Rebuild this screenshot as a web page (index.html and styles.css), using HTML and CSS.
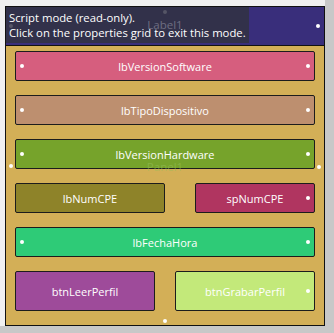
FILE: index.html
```html
<!DOCTYPE html>
<html lang="es">

<head>
    <meta charset="utf-8">
    <meta name="viewport" content="width=device-width, initial-scale=1.0">
    <title>Perfil</title>
    <link rel="stylesheet" href="styles.css">
</head>

<body>
    <main class="canvas">
        <div class="panel">
            <header class="cabecera">
                <span class="marca">Label1</span>
                <span class="punto punto-oscuro arriba"></span>
                <span class="punto punto-oscuro izquierda"></span>
                <span class="punto derecha"></span>
                <div class="aviso">Script mode (read-only).<br>Click on the properties grid to exit this mode.</div>
            </header>

            <section class="cuerpo">
                <div class="barra rosa"><span class="punto izq"></span>lbVersionSoftware<span class="punto der"></span></div>
                <div class="barra tierra"><span class="punto izq"></span>lbTipoDispositivo<span class="punto der"></span></div>
                <div class="barra verde"><span class="punto izq"></span>lbVersionHardware<span class="punto der"></span></div>
                <div class="fila">
                    <div class="barra oliva ancho-150">lbNumCPE</div>
                    <div class="barra granate ancho-120">spNumCPE<span class="punto der"></span></div>
                </div>
                <div class="barra menta"><span class="punto izq"></span>lbFechaHora<span class="punto der"></span></div>
                <div class="fila botones">
                    <div class="barra boton morado">btnLeerPerfil</div>
                    <div class="barra boton lima">btnGrabarPerfil<span class="punto der"></span></div>
                </div>
            </section>

            <span class="marca panel-marca">Panel1</span>
            <span class="punto panel-izq"></span>
            <span class="punto panel-der"></span>
            <span class="punto panel-abajo"></span>
        </div>
    </main>
</body></html>
```

FILE: styles.css
```css
body {
    margin: 0;
    background: #c8c8c8;
    font-family: "Open Sans", "Noto Sans", sans-serif;
    font-size: 11px;
}

.canvas {
    width: 320px;
    height: 320px;
    padding: 6px 0 0 5px;
    background: #f0f0f0;
}

.panel {
    position: relative;
    width: 318px;
    height: 318px;
    border: 1px solid #111;
    background: #d3af57;
}

.cabecera {
    position: relative;
    height: 38px;
    background: #392e7b;
    border-bottom: 1px solid #111;
}

.aviso {
    position: absolute;
    left: 0;
    top: 0;
    width: 240px;
    height: 30px;
    padding: 3px 0 3px 3px;
    background: rgba(50, 50, 72, 0.97);
    color: #fff;
    font-size: 11.3px;
    line-height: 15px;
    white-space: nowrap;
}

.marca {
    position: absolute;
    left: 0;
    right: 0;
    text-align: center;
    color: #6e6e82;
    font-size: 11.5px;
    top: 10px;
    z-index: 2;
}

.panel-marca {
    top: 152px;
    color: rgba(150, 190, 90, 0.55);
}

.cuerpo {
    display: flex;
    flex-direction: column;
    gap: 14px;
    padding: 5px 9px 0 9px;
}

.fila {
    display: flex;
    justify-content: space-between;
}

.barra {
    position: relative;
    height: 28px;
    border: 1px solid #1c1c1c;
    border-radius: 2px;
    display: flex;
    align-items: center;
    justify-content: center;
    color: #fff;
}

.boton {
    width: 138px;
    height: 38px;
}

.ancho-150 {
    width: 148px;
}

.ancho-120 {
    width: 118px;
}

.rosa { background: #d65e7e; }
.tierra { background: #bd8f6f; }
.verde { background: #76a32b; }
.oliva { background: #8e8329; }
.granate { background: #b03560; }
.menta { background: #2ecb77; }
.morado { background: #9e4b9a; }
.lima { background: #c3e97a; }

.punto {
    position: absolute;
    width: 4px;
    height: 4px;
    border-radius: 50%;
    background: #fff;
    z-index: 3;
}

.punto.izq { left: 4px; top: 12px; }
.punto.der { right: 4px; top: 12px; }
.boton .punto.der { top: 17px; }

.punto-oscuro { background: #555566; }
.cabecera .arriba { left: 157px; top: 3px; }
.cabecera .izquierda { left: 3px; top: 17px; z-index: 4; }
.cabecera .derecha { right: 4px; top: 17px; }

.panel-izq { left: 3px; top: 157px; }
.panel-der { right: 3px; top: 158px; }
.panel-abajo { left: 157px; top: 312px; }
```
